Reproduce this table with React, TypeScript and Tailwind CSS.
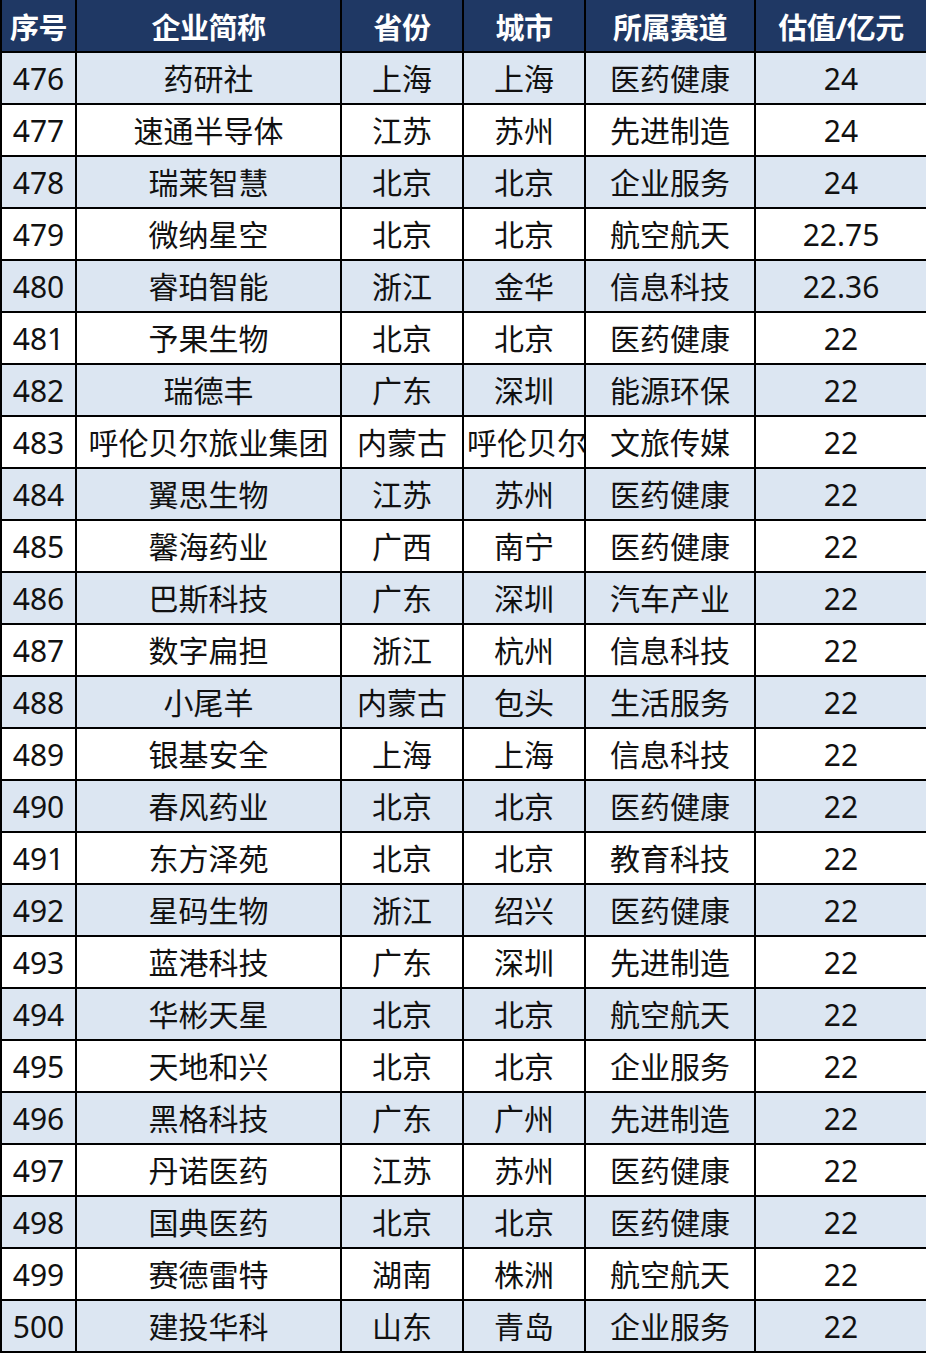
import React from "react";

const rows: [string, string, string, string, string, string][] = [
  ["476", "药研社", "上海", "上海", "医药健康", "24"],
  ["477", "速通半导体", "江苏", "苏州", "先进制造", "24"],
  ["478", "瑞莱智慧", "北京", "北京", "企业服务", "24"],
  ["479", "微纳星空", "北京", "北京", "航空航天", "22.75"],
  ["480", "睿珀智能", "浙江", "金华", "信息科技", "22.36"],
  ["481", "予果生物", "北京", "北京", "医药健康", "22"],
  ["482", "瑞德丰", "广东", "深圳", "能源环保", "22"],
  ["483", "呼伦贝尔旅业集团", "内蒙古", "呼伦贝尔", "文旅传媒", "22"],
  ["484", "翼思生物", "江苏", "苏州", "医药健康", "22"],
  ["485", "馨海药业", "广西", "南宁", "医药健康", "22"],
  ["486", "巴斯科技", "广东", "深圳", "汽车产业", "22"],
  ["487", "数字扁担", "浙江", "杭州", "信息科技", "22"],
  ["488", "小尾羊", "内蒙古", "包头", "生活服务", "22"],
  ["489", "银基安全", "上海", "上海", "信息科技", "22"],
  ["490", "春风药业", "北京", "北京", "医药健康", "22"],
  ["491", "东方泽苑", "北京", "北京", "教育科技", "22"],
  ["492", "星码生物", "浙江", "绍兴", "医药健康", "22"],
  ["493", "蓝港科技", "广东", "深圳", "先进制造", "22"],
  ["494", "华彬天星", "北京", "北京", "航空航天", "22"],
  ["495", "天地和兴", "北京", "北京", "企业服务", "22"],
  ["496", "黑格科技", "广东", "广州", "先进制造", "22"],
  ["497", "丹诺医药", "江苏", "苏州", "医药健康", "22"],
  ["498", "国典医药", "北京", "北京", "医药健康", "22"],
  ["499", "赛德雷特", "湖南", "株洲", "航空航天", "22"],
  ["500", "建投华科", "山东", "青岛", "企业服务", "22"],
];

const headers = ["序号", "企业简称", "省份", "城市", "所属赛道", "估值/亿元"];

export default function App() {
  return (
    <div
      className="w-[926px] bg-white"
      style={{ fontFamily: '"Noto Sans", "Noto Sans CJK SC", sans-serif' }}
    >
      <div className="grid grid-cols-[73px_263px_120px_120px_168px_170px] gap-[2px] bg-black pl-[2px] pb-[2px]">
        {headers.map((h) => (
          <div
            key={h}
            className="h-[51px] bg-[#1f3864] text-white font-bold text-[29px] leading-[51px] pt-[2px] text-center whitespace-nowrap overflow-hidden tracking-[-0.5px]"
          >
            {h}
          </div>
        ))}
        {rows.map((r, i) =>
          r.map((c, j) => (
            <div
              key={`${i}-${j}`}
              className={`h-[50px] ${
                i % 2 === 0 ? "bg-[#dce6f2]" : "bg-white"
              } text-[#111111] text-[30px] leading-[50px] pt-[1px] text-center whitespace-nowrap overflow-hidden ${
                j === 3 && c.length > 3 ? "text-left pl-[3px]" : ""
              }`}
            >
              {c}
            </div>
          ))
        )}
      </div>
    </div>
  );
}
